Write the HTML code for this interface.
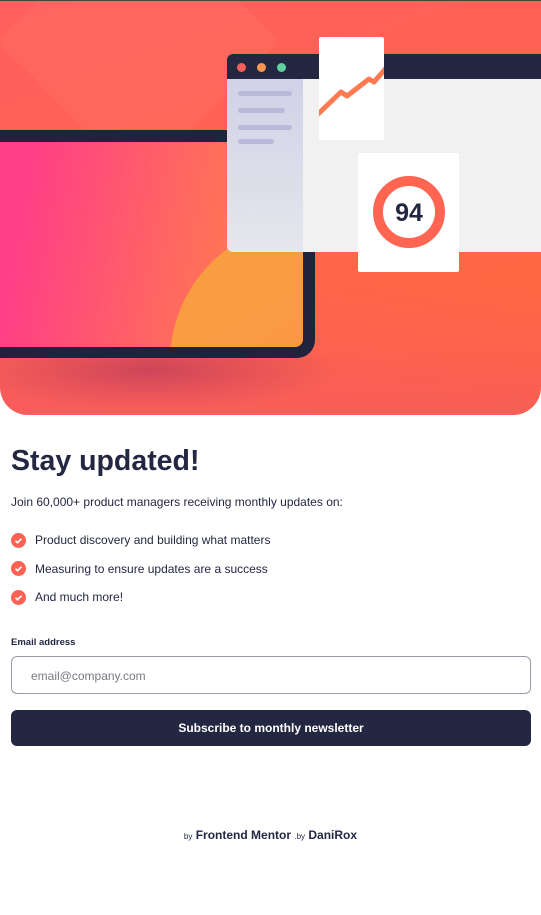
<!DOCTYPE html>
<html><head><meta charset="utf-8"><style>
*{margin:0;padding:0;box-sizing:border-box}
body{width:541px;height:915px;background:#fff;font-family:"Liberation Sans",Roboto,sans-serif;color:#242742;overflow:hidden;position:relative}
.hero{position:absolute;left:0;top:0;width:541px;height:415px;border-radius:0 0 28px 28px;overflow:hidden;
background:linear-gradient(160deg,#ff5f5e 0%,#ff6350 45%,#ff6a3a 100%);border-top:1px solid #444}
.hero:after{content:"";position:absolute;left:0;top:280px;width:541px;height:135px;background:linear-gradient(180deg,rgba(255,90,100,0),rgba(240,80,120,.45))}
.abs{position:absolute}
</style></head><body>
<div class="hero">
  <div class="abs" style="left:38px;top:-60px;width:200px;height:200px;transform:rotate(45deg);background:rgba(255,150,120,.12);border-radius:8px"></div>
  <div class="abs" style="left:-40px;top:330px;width:380px;height:80px;background:radial-gradient(ellipse at center,rgba(150,40,80,.6),rgba(150,40,80,0) 70%)"></div>
  <div class="abs" style="left:-20px;top:129px;width:335px;height:228px;background:#21233e;border-radius:0 0 18px 0;z-index:1"></div>
  <div class="abs" style="left:0;top:141px;width:303px;height:205px;border-radius:0 0 8px 0;overflow:hidden;background:linear-gradient(100deg,#ff3f86 10%,#ff6a5e 60%,#ff8a45 100%);z-index:2">
    <div class="abs" style="left:170px;top:80px;width:280px;height:280px;border-radius:50%;background:linear-gradient(150deg,#f9a040,#fb8f45)"></div>
  </div>
  <div class="abs" style="left:227px;top:53px;width:330px;height:198px;background:#f1f1f1;border-radius:6px;overflow:hidden;z-index:3">
    <div class="abs" style="left:0;top:0;width:330px;height:25px;background:#242742"></div>
    <div class="abs" style="left:10px;top:9px;width:9px;height:9px;border-radius:50%;background:#f5605a"></div>
    <div class="abs" style="left:30px;top:9px;width:9px;height:9px;border-radius:50%;background:#fe9651"></div>
    <div class="abs" style="left:50px;top:9px;width:9px;height:9px;border-radius:50%;background:#5fd0a0"></div>
    <div class="abs" style="left:0;top:25px;width:76px;height:173px;background:linear-gradient(180deg,#d1d1e8,#e6e6ec)"></div>
    <div class="abs" style="left:11px;top:37px;width:54px;height:5px;border-radius:3px;background:#b9b9d9"></div>
    <div class="abs" style="left:11px;top:54px;width:47px;height:5px;border-radius:3px;background:#b9b9d9"></div>
    <div class="abs" style="left:11px;top:71px;width:54px;height:5px;border-radius:3px;background:#b9b9d9"></div>
    <div class="abs" style="left:11px;top:85px;width:36px;height:5px;border-radius:3px;background:#b9b9d9"></div>
  </div>
  <div class="abs" style="left:319px;top:36px;width:65px;height:103px;background:#fff;border-radius:2px;z-index:4;overflow:hidden">
    <svg width="65" height="103" viewBox="0 0 65 103"><path d="M-4 80 L22 55 L28 59 L50 42 L55 45 L68 30" fill="none" stroke="#ff7a50" stroke-width="5" stroke-linejoin="round"/></svg>
  </div>
  <div class="abs" style="left:358px;top:152px;width:101px;height:119px;background:#fff;border-radius:2px;z-index:4">
    <svg width="101" height="119" viewBox="0 0 101 119"><circle cx="51" cy="59" r="31" fill="none" stroke="#ff6550" stroke-width="10"/>
    <text x="51" y="68" text-anchor="middle" font-family="Liberation Sans,sans-serif" font-weight="bold" font-size="25" fill="#242742">94</text></svg>
  </div>
</div>
<h1 class="abs" style="left:11px;top:445px;font-size:28.5px;font-weight:bold;color:#242742">Stay updated!</h1>
<p class="abs" style="left:11px;top:495px;font-size:12px;color:#242742">Join 60,000+ product managers receiving monthly updates on:</p>
<div class="abs" style="left:11px;top:526px;font-size:12px;line-height:28.5px;color:#242742">
  <div style="display:flex;align-items:center"><svg width="15" height="15" style="margin-right:9px"><circle cx="7.5" cy="7.5" r="7.5" fill="#ff6155"/><path d="M4.5 7.7l2 2 4-4" stroke="#fff" stroke-width="1.6" fill="none"/></svg>Product discovery and building what matters</div>
  <div style="display:flex;align-items:center"><svg width="15" height="15" style="margin-right:9px"><circle cx="7.5" cy="7.5" r="7.5" fill="#ff6155"/><path d="M4.5 7.7l2 2 4-4" stroke="#fff" stroke-width="1.6" fill="none"/></svg>Measuring to ensure updates are a success</div>
  <div style="display:flex;align-items:center"><svg width="15" height="15" style="margin-right:9px"><circle cx="7.5" cy="7.5" r="7.5" fill="#ff6155"/><path d="M4.5 7.7l2 2 4-4" stroke="#fff" stroke-width="1.6" fill="none"/></svg>And much more!</div>
</div>
<div class="abs" style="left:11px;top:637px;font-size:9.5px;font-weight:bold;color:#242742">Email address</div>
<div class="abs" style="left:11px;top:656px;width:520px;height:38px;border:1px solid #9a9aa8;border-radius:6px;font-size:12px;color:#7a7a85;padding:12px 0 0 19px">email@company.com</div>
<div class="abs" style="left:11px;top:710px;width:520px;height:36px;background:#242742;border-radius:6px;color:#fff;font-size:12px;font-weight:bold;text-align:center;line-height:36px">Subscribe to monthly newsletter</div>
<div class="abs" style="left:0;top:828px;width:541px;text-align:center;font-size:12px;font-weight:bold;color:#242742"><span style="font-size:8px;font-weight:normal">by</span> Frontend Mentor <span style="font-size:8px;font-weight:normal">.by</span> DaniRox</div>
</body></html>
